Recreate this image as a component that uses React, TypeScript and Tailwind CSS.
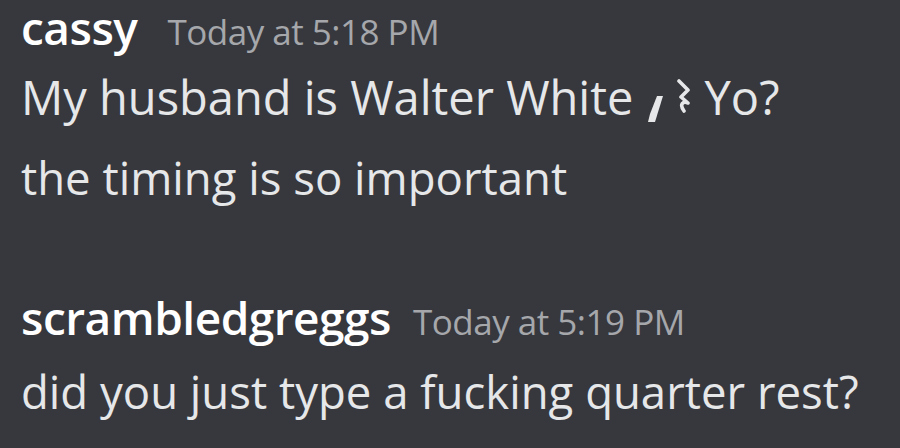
import React from "react";

function Comma() {
  return (
    <svg width="18" height="28" viewBox="0 0 18 28" className="inline-block" style={{ verticalAlign: "-8px" }}>
      <polygon points="11,1 17,1 9,27 2,27 4,19" fill="#e6e7e8" />
    </svg>
  );
}

function QuarterRest() {
  return (
    <svg width="22" height="34" viewBox="0 0 22 34" className="inline-block ml-[9px]" style={{ verticalAlign: "2px" }}>
      <path
        d="M6 2 L15 11 L8 18 L15 24 C10 22 6 25 11 32"
        fill="none"
        stroke="#e6e7e8"
        strokeWidth="3.6"
        strokeLinejoin="round"
        strokeLinecap="round"
      />
    </svg>
  );
}

function Header({ name, time, gap }: { name: string; time: string; gap: string }) {
  return (
    <div className="flex items-baseline h-[59px] pt-[4px]">
      <span className="text-[46px] leading-[46px] font-semibold text-white tracking-[-0.5px]">{name}</span>
      <span className={gap + " text-[35px] leading-[40px] text-[#a5a7ab] tracking-[-0.5px]"}>{time}</span>
    </div>
  );
}

export default function App() {
  return (
    <div
      className="w-[900px] h-[448px] bg-[#36383d] overflow-hidden pl-[21px]"
      style={{ fontFamily: '"Open Sans", "Noto Sans", sans-serif' }}
    >
      <Header name="cassy" time="Today at 5:18 PM" gap="ml-[30px]" />
      <div className="h-[79px] leading-[76px] text-[47px] text-[#e6e7e9] whitespace-nowrap">
        My husband is Walter White <Comma />
        <QuarterRest />
        <span className="ml-[10px]">Yo?</span>
      </div>
      <div className="h-[78px] leading-[78px] text-[45.5px] text-[#e6e7e9] whitespace-nowrap">
        the timing is so important
      </div>
      <div className="mt-[74px]">
        <Header name="scrambledgreggs" time="Today at 5:19 PM" gap="ml-[22px]" />
        <div className="mt-[3px] h-[78px] leading-[78px] text-[45.5px] text-[#e6e7e9] whitespace-nowrap">
          did you just type a fucking quarter rest?
        </div>
      </div>
    </div>
  );
}
